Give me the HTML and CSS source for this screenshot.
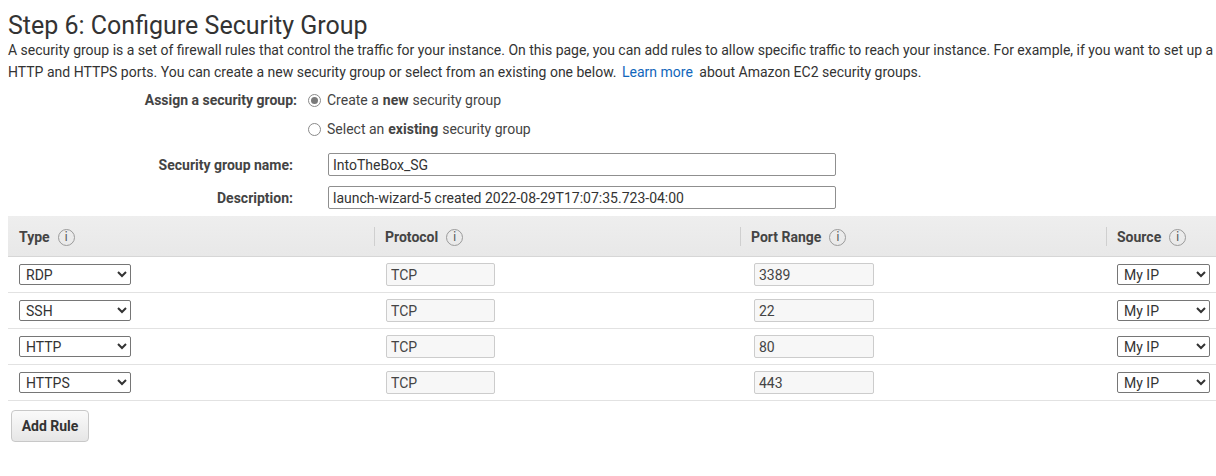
FILE: index.html
```html
<!DOCTYPE html>
<html>
<head>
<meta charset="utf-8">
<link rel="stylesheet" href="styles.css">
</head>
<body>
<div class="page">
  <h1 class="title">Step 6: Configure Security Group</h1>
  <p class="intro">
    <span class="line">A security group is a set of firewall rules that control the traffic for your instance. On this page, you can add rules to allow specific traffic to reach your instance. For example, if you want to set up a</span>
    <span class="line">HTTP and HTTPS ports. You can create a new security group or select from an existing one below. <a class="link" href="#">Learn more</a> about Amazon EC2 security groups.</span>
  </p>

  <div class="assign">
    <div class="assign-label">Assign a security group:</div>
    <div class="options">
      <label class="option"><span class="radio checked"></span>Create a <b>new</b> security group</label>
      <label class="option"><span class="radio"></span>Select an <b>existing</b> security group</label>
    </div>
  </div>

  <div class="fields">
    <div class="field-label">Security group name:</div>
    <input class="text-input" type="text" value="IntoTheBox_SG">
    <div class="field-label">Description:</div>
    <input class="text-input" type="text" value="launch-wizard-5 created 2022-08-29T17:07:35.723-04:00">
  </div>

  <div class="rules">
    <div class="rules-head">
      <div class="th">Type <span class="info">i</span></div>
      <div class="th sep">Protocol <span class="info">i</span></div>
      <div class="th sep">Port Range <span class="info">i</span></div>
      <div class="th sep">Source <span class="info">i</span></div>
    </div>

    <div class="rule-row">
      <div class="td"><select class="sel type-sel"><option>RDP</option></select></div>
      <div class="td"><input class="ro proto" type="text" value="TCP" readonly></div>
      <div class="td"><input class="ro port" type="text" value="3389" readonly></div>
      <div class="td"><select class="sel src-sel"><option>My IP</option></select></div>
    </div>
    <div class="rule-row">
      <div class="td"><select class="sel type-sel"><option>SSH</option></select></div>
      <div class="td"><input class="ro proto" type="text" value="TCP" readonly></div>
      <div class="td"><input class="ro port" type="text" value="22" readonly></div>
      <div class="td"><select class="sel src-sel"><option>My IP</option></select></div>
    </div>
    <div class="rule-row">
      <div class="td"><select class="sel type-sel"><option>HTTP</option></select></div>
      <div class="td"><input class="ro proto" type="text" value="TCP" readonly></div>
      <div class="td"><input class="ro port" type="text" value="80" readonly></div>
      <div class="td"><select class="sel src-sel"><option>My IP</option></select></div>
    </div>
    <div class="rule-row">
      <div class="td"><select class="sel type-sel"><option>HTTPS</option></select></div>
      <div class="td"><input class="ro proto" type="text" value="TCP" readonly></div>
      <div class="td"><input class="ro port" type="text" value="443" readonly></div>
      <div class="td"><select class="sel src-sel"><option>My IP</option></select></div>
    </div>
  </div>

  <button class="add-btn" type="button">Add Rule</button>
</div>
</body>
</html>
```

FILE: styles.css
```css
html, body {
  margin: 0;
  padding: 0;
  background: #fff;
  overflow: hidden;
}

body {
  font-family: Roboto, "Liberation Sans", Arial, sans-serif;
  font-size: 14px;
  color: #333;
}

.page {
  padding-left: 8px;
  width: 1208px;
}

.title {
  margin: 0;
  padding-top: 13px;
  font-size: 25px;
  font-weight: 400;
  line-height: 26px;
  color: #333;
}

.intro {
  margin: 0;
  line-height: 22px;
}

.intro .line {
  display: block;
  white-space: nowrap;
}

.link {
  color: #1166bb;
  text-decoration: none;
  margin: 0 3px 0 2px;
}

.assign {
  display: grid;
  grid-template-columns: 289px auto;
  column-gap: 11px;
  margin-top: 3px;
}

.assign-label {
  text-align: right;
  font-weight: 700;
  color: #444;
  line-height: 29px;
}

.options {
  display: flex;
  flex-direction: column;
}

.option {
  display: flex;
  align-items: center;
  line-height: 29px;
  color: #444;
}

.option b {
  font-weight: 700;
  margin: 0 4px;
}

.radio {
  width: 11px;
  height: 11px;
  border: 1px solid #8a8a8a;
  border-radius: 50%;
  margin-right: 6px;
  position: relative;
  background: #fff;
  box-sizing: content-box;
}

.radio.checked::after {
  content: "";
  position: absolute;
  left: 2px;
  top: 2px;
  width: 7px;
  height: 7px;
  border-radius: 50%;
  background: #7a7a7a;
}

.fields {
  display: grid;
  grid-template-columns: 285px 508px;
  column-gap: 35px;
  grid-auto-rows: 33px;
  align-items: center;
  margin-top: 4px;
}

.field-label {
  text-align: right;
  font-weight: 700;
  color: #444;
}

.text-input {
  box-sizing: border-box;
  width: 508px;
  height: 23px;
  border: 1px solid #8f8f8f;
  border-radius: 2px;
  padding: 0 4px;
  font-family: Roboto, "Liberation Sans", Arial, sans-serif;
  font-size: 14px;
  color: #333;
  background: #fff;
  outline: none;
}

.rules {
  margin-top: 2px;
}

.rules-head {
  display: grid;
  grid-template-columns: 366px 366px 366px 110px;
  height: 40px;
  background: linear-gradient(#eeeeee, #e8e8e8);
  border-bottom: 1px solid #d6d6d6;
}

.th {
  display: flex;
  align-items: center;
  padding-left: 11px;
  padding-top: 2px;
  font-weight: 700;
  color: #444;
  position: relative;
}

.th.sep::before {
  content: "";
  position: absolute;
  left: 0;
  top: 11px;
  height: 19px;
  border-left: 1px solid #cfcfcf;
}

.info {
  display: inline-flex;
  align-items: center;
  justify-content: center;
  width: 15px;
  height: 15px;
  margin-left: 8px;
  border: 1px solid #9a9a9a;
  border-radius: 50%;
  font-size: 12px;
  font-weight: 400;
  color: #555;
  font-family: "DejaVu Sans", sans-serif;
  line-height: 1;
}

.rule-row {
  display: grid;
  grid-template-columns: 366px 366px 366px 110px;
  height: 35px;
  border-bottom: 1px solid #e2e2e2;
}

.td {
  display: flex;
  align-items: center;
  padding-left: 11px;
}

.sel {
  box-sizing: border-box;
  height: 21px;
  font-family: Roboto, "Liberation Sans", Arial, sans-serif;
  font-size: 14px;
  color: #333;
  border: 1px solid #767676;
  border-radius: 2px;
  background: #fff;
  padding: 0 0 0 2px;
}

.type-sel {
  width: 112px;
}

.src-sel {
  width: 93px;
}

.ro {
  box-sizing: border-box;
  height: 23px;
  border: 1px solid #cccccc;
  border-radius: 2px;
  background: #f7f7f7;
  padding: 0 4px;
  font-family: Roboto, "Liberation Sans", Arial, sans-serif;
  font-size: 14px;
  color: #444;
  outline: none;
}

.proto {
  width: 109px;
  margin-left: 1px;
}

.port {
  width: 120px;
  margin-left: 3px;
}

.add-btn {
  margin: 9px 0 0 3px;
  width: 78px;
  height: 32px;
  border: 1px solid #c8c8c8;
  border-radius: 4px;
  background: linear-gradient(#fafafa, #e6e6e6);
  font-family: Roboto, "Liberation Sans", Arial, sans-serif;
  font-size: 14px;
  font-weight: 700;
  color: #333;
  padding: 0;
}
```
